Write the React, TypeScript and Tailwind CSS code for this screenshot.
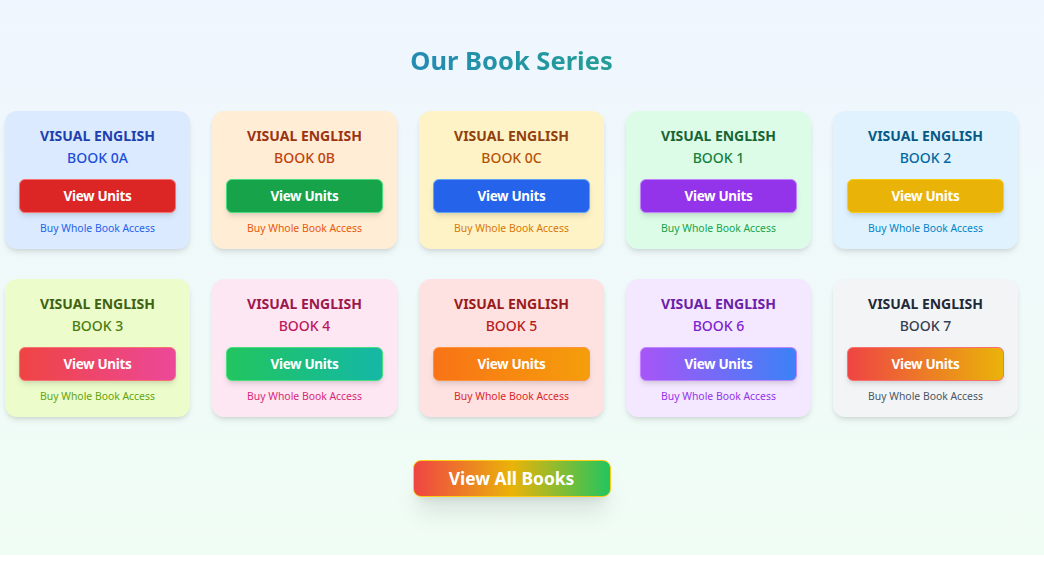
const books = [
  { name: "BOOK 0A", card: "bg-[#dbeafe]", title: "text-[#1e40af]", sub: "text-[#1d4ed8]", link: "text-[#2563eb]", btn: "bg-[#dc2626] border-[#f87171]" },
  { name: "BOOK 0B", card: "bg-[#ffedd5]", title: "text-[#9a3412]", sub: "text-[#c2410c]", link: "text-[#ea580c]", btn: "bg-[#16a34a] border-[#4ade80]" },
  { name: "BOOK 0C", card: "bg-[#fef3c7]", title: "text-[#92400e]", sub: "text-[#b45309]", link: "text-[#d97706]", btn: "bg-[#2563eb] border-[#60a5fa]" },
  { name: "BOOK 1", card: "bg-[#dcfce7]", title: "text-[#166534]", sub: "text-[#15803d]", link: "text-[#16a34a]", btn: "bg-[#9333ea] border-[#c084fc]" },
  { name: "BOOK 2", card: "bg-[#e0f2fe]", title: "text-[#075985]", sub: "text-[#0369a1]", link: "text-[#0284c7]", btn: "bg-[#eab308] border-[#facc15]" },
  { name: "BOOK 3", card: "bg-[#ecfccb]", title: "text-[#3f6212]", sub: "text-[#4d7c0f]", link: "text-[#65a30d]", btn: "bg-linear-to-r/srgb from-[#ef4444] to-[#ec4899] border-[#f87171]" },
  { name: "BOOK 4", card: "bg-[#fce7f3]", title: "text-[#9d174d]", sub: "text-[#be185d]", link: "text-[#db2777]", btn: "bg-linear-to-r/srgb from-[#22c55e] to-[#14b8a6] border-[#4ade80]" },
  { name: "BOOK 5", card: "bg-[#fee2e2]", title: "text-[#991b1b]", sub: "text-[#b91c1c]", link: "text-[#dc2626]", btn: "bg-linear-to-r/srgb from-[#f97316] to-[#f59e0b] border-[#fb923c]" },
  { name: "BOOK 6", card: "bg-[#f3e8ff]", title: "text-[#6b21a8]", sub: "text-[#7e22ce]", link: "text-[#9333ea]", btn: "bg-linear-to-r/srgb from-[#a855f7] to-[#3b82f6] border-[#c084fc]" },
  { name: "BOOK 7", card: "bg-[#f3f4f6]", title: "text-[#1f2937]", sub: "text-[#374151]", link: "text-[#4b5563]", btn: "bg-linear-to-r/srgb from-[#ef4444] to-[#eab308] border-[#f87171]" },
];

function BookCard({ book }: { book: (typeof books)[number] }) {
  return (
    <div className={`rounded-xl ${book.card} px-[14px] pt-[14px] pb-[13px] text-center shadow-md`}>
      <h3 className={`text-[14px] leading-[22px] font-bold ${book.title}`}>VISUAL ENGLISH</h3>
      <p className={`text-[14px] leading-[22px] font-medium ${book.sub}`}>{book.name}</p>
      <button className={`mt-[10px] flex h-[34px] w-full items-center justify-center rounded-md border ${book.btn} text-[13.5px] font-bold tracking-tight text-white shadow-md`}>
        View Units
      </button>
      <a className={`mt-[7px] block text-[10.4px] leading-4 ${book.link}`}>Buy Whole Book Access</a>
    </div>
  );
}

export default function App() {
  return (
    <div className="bg-white" style={{ fontFamily: '"Noto Sans", "Open Sans", sans-serif' }}>
      <section className="h-[555px] bg-linear-to-b/srgb from-[#eff6ff] to-[#f0fdf4] pt-[42px] pl-[5px] pr-[26px]">
        <h2 className="bg-linear-to-r/srgb from-[#2563eb] to-[#22c55e] bg-clip-text text-center text-[25.5px] leading-9 font-bold text-transparent">
          Our Book Series
        </h2>
        <div className="mt-[33px] grid grid-cols-5 gap-x-[22px] gap-y-[30px]">
          {books.map((b) => (
            <BookCard key={b.name} book={b} />
          ))}
        </div>
        <div className="mt-[43px] flex justify-center">
          <button className="h-[37px] w-[198px] rounded-lg border border-[#facc15] bg-linear-to-r/srgb from-[#ef4444] via-[#eab308] to-[#22c55e] text-[17.4px] font-bold text-white shadow-xl">
            View All Books
          </button>
        </div>
      </section>
    </div>
  );
}
